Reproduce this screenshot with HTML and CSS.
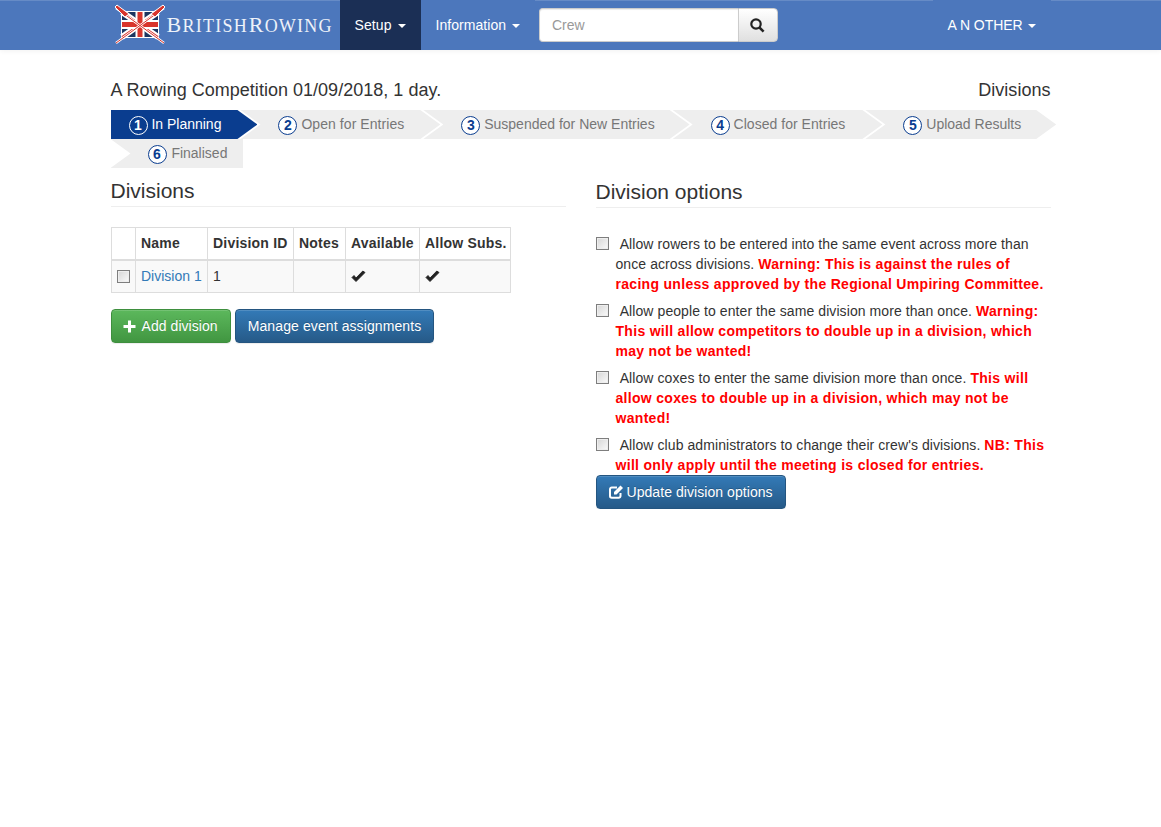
FILE: index.html
```html
<!DOCTYPE html>
<html lang="en">
<head>
<meta charset="utf-8">
<title>Divisions</title>
<link rel="stylesheet" href="styles.css">
</head>
<body>
<nav class="navbar">
  <div class="container nav-inner">
    <a class="brand" href="#">
      <svg class="logo" width="52" height="42" viewBox="0 0 52 42">
        <rect x="7" y="7" width="38" height="27" fill="#fff"/>
        <rect x="8" y="8" width="36" height="25" fill="#1c3560"/>
        <path d="M8 8 L44 33 M44 8 L8 33" stroke="#fff" stroke-width="6"/>
        <path d="M8 8 L44 33 M44 8 L8 33" stroke="#d8342c" stroke-width="2"/>
        <path d="M26 8 V33 M8 20.500 H44" stroke="#fff" stroke-width="9"/>
        <path d="M26 8 V33 M8 20.500 H44" stroke="#d8342c" stroke-width="5"/>
        <path d="M2 4 L50 39 M50 4 L2 39" stroke="#fff" stroke-width="2.400"/>
        <path d="M2 4 L50 39 M50 4 L2 39" stroke="#d8342c" stroke-width="1"/>
        <path d="M1 3 L3 1 L15 10 L11 13 Z M51 3 L49 1 L37 10 L41 13 Z" fill="#d8342c" stroke="#fff" stroke-width="1"/>
      </svg>
      <span class="brand-text"><span class="brand-cap">B</span>RITISH <span class="brand-cap">R</span>OWING</span>
    </a>
    <a class="nav-link active" href="#">Setup <span class="caret"></span></a>
    <a class="nav-link solid info" href="#">Information <span class="caret"></span></a>
    <form class="search">
      <input class="search-input" type="text" placeholder="Crew">
      <button class="search-btn" type="button" aria-label="Search">
        <svg width="15" height="15" viewBox="0 0 15 15"><circle cx="6" cy="6" r="4.700" fill="none" stroke="#222" stroke-width="2.200"/><path d="M9.300 9.300 L13.600 13.600" stroke="#222" stroke-width="2.600"/></svg>
      </button>
    </form>
    <a class="nav-link solid user" href="#">A N OTHER <span class="caret"></span></a>
  </div>
</nav>

<main class="container">
  <div class="title-row">
    <span>A Rowing Competition 01/09/2018, 1 day.</span>
    <span>Divisions</span>
  </div>

  <ol class="steps">
    <li class="step first current"><span class="num">1</span> In Planning</li>
    <li class="step open"><span class="num">2</span> Open for Entries</li>
    <li class="step suspended"><span class="num">3</span> Suspended for New Entries</li>
    <li class="step closed"><span class="num">4</span> Closed for Entries</li>
    <li class="step upload"><span class="num">5</span> Upload Results</li>
    <li class="step wrapped last"><span class="num">6</span> Finalised</li>
  </ol>

  <div class="columns">
    <section class="col">
      <h3 class="heading">Divisions</h3>
      <table class="table">
        <thead>
          <tr><th class="c1"></th><th class="c2">Name</th><th class="c3">Division ID</th><th class="c4">Notes</th><th class="c5">Available</th><th class="c6">Allow Subs.</th></tr>
        </thead>
        <tbody>
          <tr>
            <td><input class="check in-table" type="checkbox"></td>
            <td><a class="link" href="#">Division 1</a></td>
            <td>1</td>
            <td></td>
            <td><svg class="tick" width="15" height="13" viewBox="0 0 15 13"><path d="M1 7.500 L5 11.500 L14 2.500 L11.800 1 L5 8 L3 5.500 Z" fill="#222" stroke="#222" stroke-width=".9"/></svg></td>
            <td><svg class="tick" width="15" height="13" viewBox="0 0 15 13"><path d="M1 7.500 L5 11.500 L14 2.500 L11.800 1 L5 8 L3 5.500 Z" fill="#222" stroke="#222" stroke-width=".9"/></svg></td>
          </tr>
        </tbody>
      </table>
      <div class="actions">
        <button class="btn success" type="button"><svg class="plus" width="13" height="13" viewBox="0 0 13 13"><path d="M5 0.500 H8 V5 H12.500 V8 H8 V12.500 H5 V8 H0.500 V5 H5 Z" fill="#fff"/></svg> Add division</button>
        <button class="btn primary manage" type="button">Manage event assignments</button>
      </div>
    </section>

    <section class="col">
      <h3 class="heading">Division options</h3>
      <div class="options">
        <label class="option"><input class="check" type="checkbox"> Allow rowers to be entered into the same event across more than once across divisions. <strong class="warn">Warning: This is against the rules of racing unless approved by the Regional Umpiring Committee.</strong></label>
        <label class="option"><input class="check" type="checkbox"> Allow people to enter the same division more than once. <strong class="warn">Warning: This will allow competitors to double up in a division, which may not be wanted!</strong></label>
        <label class="option"><input class="check" type="checkbox"> Allow coxes to enter the same division more than once. <strong class="warn">This will allow coxes to double up in a division, which may not be wanted!</strong></label>
        <label class="option"><input class="check" type="checkbox"> Allow club administrators to change their crew's divisions. <strong class="warn">NB: This will only apply until the meeting is closed for entries.</strong></label>
      </div>
      <button class="btn primary update" type="button"><svg width="15" height="14" viewBox="0 0 15 14"><path d="M11.500 8 V11 A1.800 1.800 0 0 1 9.700 12.800 H2.800 A1.800 1.800 0 0 1 1 11 V4.300 A1.800 1.800 0 0 1 2.800 2.500 H8" fill="none" stroke="#fff" stroke-width="2"/><path d="M5 7 L11.500 .5 L14 3 L7.500 9.500 H5 Z" fill="#fff"/></svg> Update division options</button>
    </section>
  </div>
</main>
</body>
</html>
```
FILE: styles.css
```css
* { box-sizing: border-box; }

body {
  margin: 0;
  background: #fff;
  color: #333;
  font-family: "Liberation Sans", Arial, sans-serif;
  font-size: 14px;
  line-height: 20px;
}

a { text-decoration: none; }

.container {
  width: 970px;
  margin: 0 auto;
  padding: 0 15px;
}

/* Navbar */
.navbar {
  height: 50px;
  background: #4c77bc;
  box-shadow: inset 0 1px 0 rgba(255, 255, 255, .15), 0 1px 5px rgba(0, 0, 0, .06);
}

.nav-inner {
  display: flex;
  height: 50px;
}

.brand {
  display: flex;
  align-items: center;
  width: 229px;
  flex: none;
  color: #eef2f9;
}

.logo {
  flex: none;
  margin: 0 0 0 3px;
}

.brand-text {
  font-family: "Liberation Serif", serif;
  font-size: 18px;
  line-height: 50px;
  letter-spacing: 1.25px;
  word-spacing: -5px;
  white-space: nowrap;
  margin: 1px 0 0 1px;
}

.brand-cap { font-size: 22px; }

.nav-link {
  display: block;
  height: 50px;
  padding: 15px;
  color: #fff;
  line-height: 20px;
  letter-spacing: .1px;
  white-space: nowrap;
}

.nav-link.active { background: #1b2f55; }
.nav-link.solid { background: #4c77bc; }
.nav-link.info { letter-spacing: .04px; }

.user {
  width: 118px;
  margin-left: auto;
  letter-spacing: -.03px;
}

.user .caret { margin-left: 1px; }

.caret {
  display: inline-block;
  width: 0;
  height: 0;
  margin-left: 2px;
  vertical-align: middle;
  border-top: 4px solid #fff;
  border-left: 4px solid transparent;
  border-right: 4px solid transparent;
}

.search {
  display: flex;
  margin: 8px 0 0 4px;
  height: 34px;
}

.search-input {
  width: 199px;
  height: 34px;
  padding: 6px 12px;
  border: 1px solid #ccc;
  border-right: 0;
  border-radius: 4px 0 0 4px;
  background: #fff;
  font: 14px/20px "Liberation Sans", Arial, sans-serif;
  box-shadow: inset 0 1px 1px rgba(0, 0, 0, .075);
}

.search-input::placeholder { color: #999; }

.search-btn {
  display: flex;
  align-items: center;
  justify-content: center;
  width: 40px;
  height: 34px;
  padding: 0;
  border: 1px solid #ccc;
  border-radius: 0 4px 4px 0;
  background: linear-gradient(#fff, #e0e0e0);
}

/* Title */
.title-row {
  display: flex;
  justify-content: space-between;
  padding-top: 28px;
  font-size: 18px;
  line-height: 25px;
  letter-spacing: .02px;
}

/* Steps */
.steps {
  display: flex;
  flex-wrap: wrap;
  list-style: none;
  margin: 7px -20px 0 0;
  padding: 0;
}

.step {
  height: 29px;
  margin-left: -17px;
  padding: 0 36px 0 38px;
  background: #eee;
  color: #777;
  line-height: 29px;
  white-space: nowrap;
  clip-path: polygon(0 0, calc(100% - 20px) 0, 100% 50%, calc(100% - 20px) 100%, 0 100%, 20px 50%);
}

.step.open { letter-spacing: .06px; }
.step.suspended { padding-right: 35px; }
.step.closed { letter-spacing: .03px; padding-right: 37px; }
.step.upload { padding-right: 35px; }

.step.first {
  margin-left: 0;
  padding-left: 18px;
  clip-path: polygon(0 0, calc(100% - 20px) 0, 100% 50%, calc(100% - 20px) 100%, 0 100%);
}

.step.current {
  background: #0a3d8f;
  color: #fff;
}

.step.wrapped { margin-left: 0; }

.step.last {
  padding-left: 37px;
  padding-right: 16px;
  clip-path: polygon(0 0, 100% 0, 100% 100%, 0 100%, 20px 50%);
}

.last .num { margin-right: 1px; }

.num {
  display: inline-block;
  width: 19px;
  height: 19px;
  border: 1.500px solid #0a3d8f;
  border-radius: 50%;
  color: #0a3d8f;
  background: #fff;
  font-weight: bold;
  line-height: 16px;
  text-align: center;
  vertical-align: -1px;
}

.current .num {
  border-color: #fff;
  background: transparent;
  color: #fff;
}

/* Columns */
.columns {
  display: grid;
  grid-template-columns: 455px 455px;
  column-gap: 30px;
  margin-top: 9px;
}

.heading {
  height: 30px;
  margin: 0;
  padding: 2px 0 3px;
  border-bottom: 1px solid #eee;
  color: #333;
  font-size: 21px;
  font-weight: normal;
  line-height: 24px;
}

.col:last-child .heading { margin-top: 1px; }

/* Table */
.table {
  width: 399px;
  margin-top: 20px;
  border-collapse: collapse;
  table-layout: fixed;
}

.table th,
.table td {
  padding: 5px 0 5px 5.500px;
  border: 1px solid #ddd;
  text-align: left;
  vertical-align: middle;
  white-space: nowrap;
}

.table thead th {
  height: 32px;
  border-bottom-width: 2px;
  letter-spacing: .2px;
}

.table tbody tr {
  height: 33px;
  background: #f9f9f9;
}

.c1 { width: 24px; }
.c2 { width: 72px; }
.c3 { width: 86px; }
.c4 { width: 52px; }
.c5 { width: 74px; }
.c6 { width: 91px; }

.link { color: #337ab7; }

.tick { display: block; }

.check {
  appearance: none;
  width: 13px;
  height: 13px;
  margin: 0 8px 0 -20px;
  border: 1px solid #7e7e7e;
  background: linear-gradient(135deg, #d6d6d6, #fbfbfb);
  box-shadow: inset 0 0 0 1px #eee;
  vertical-align: -1px;
}

.check.in-table {
  display: block;
  margin: 0;
}

/* Buttons */
.actions {
  display: flex;
  gap: 4px;
  margin-top: 16px;
}

.btn {
  display: inline-flex;
  align-items: center;
  gap: 4px;
  height: 34px;
  padding: 6px 12px;
  border: 1px solid transparent;
  border-radius: 4px;
  color: #fff;
  font: 14px/20px "Liberation Sans", Arial, sans-serif;
  letter-spacing: .06px;
  text-shadow: 0 -1px 0 rgba(0, 0, 0, .2);
  box-shadow: inset 0 1px 0 rgba(255, 255, 255, .15), 0 1px 1px rgba(0, 0, 0, .075);
}

.btn.manage { letter-spacing: .1px; }
.btn.update { gap: 3px; }

.plus { margin: 0 2px 0 -1px; }

.success {
  border-color: #3e8f3e;
  background: linear-gradient(#5cb85c, #419641);
}

.primary {
  border-color: #245580;
  background: linear-gradient(#337ab7, #265a88);
}

/* Options */
.options { margin-top: 26px; }

.option {
  display: block;
  margin-bottom: 7px;
  padding-left: 20px;
  letter-spacing: .08px;
}

.option:last-child { margin-bottom: 0; }

.warn {
  color: #f00;
  letter-spacing: .3px;
}
```
